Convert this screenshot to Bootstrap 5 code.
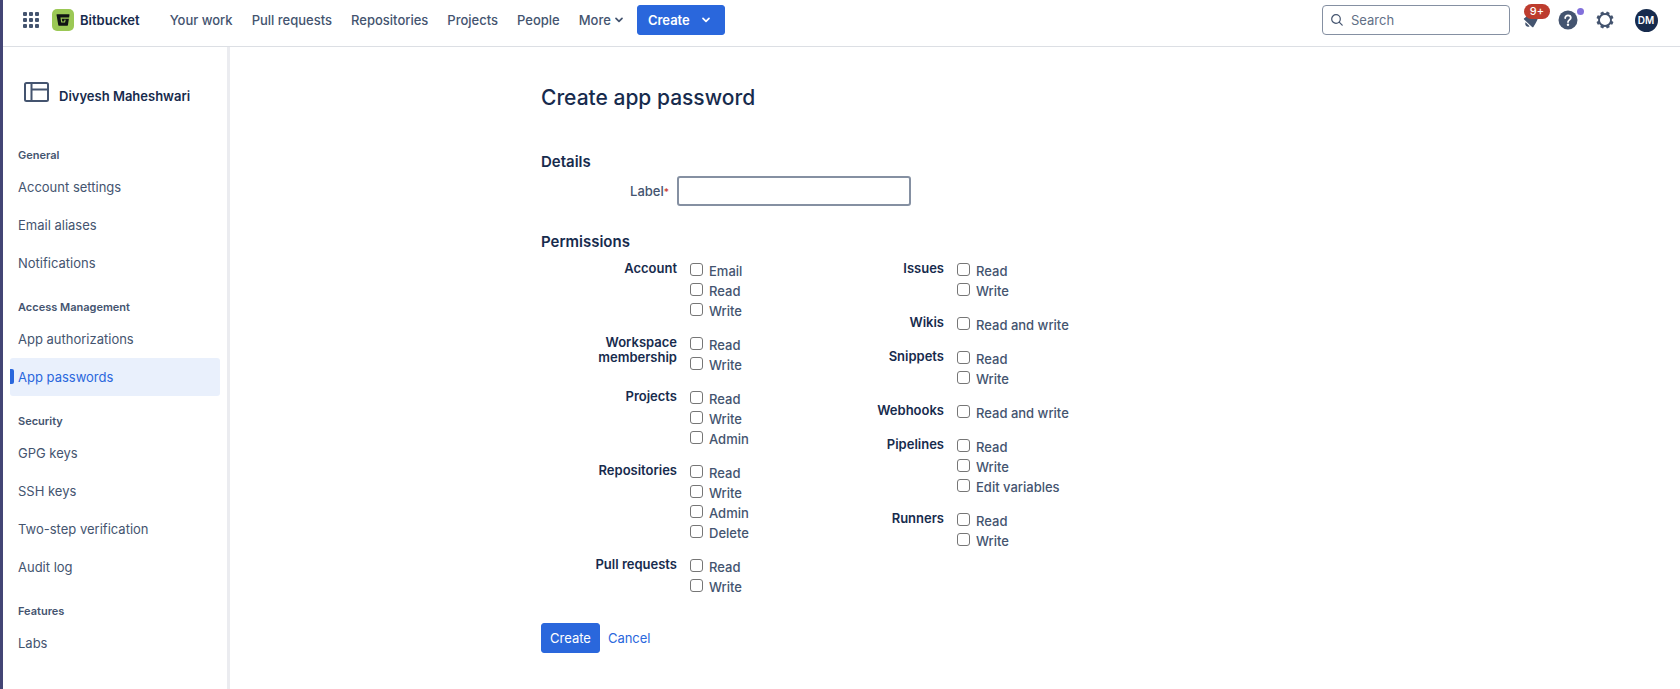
<!DOCTYPE html>
<html lang="en">
<head>
<meta charset="utf-8">
<meta name="viewport" content="width=device-width, initial-scale=1">
<title>Create app password - Bitbucket</title>
<link href="https://cdn.jsdelivr.net/npm/bootstrap@5.3.0/dist/css/bootstrap.min.css" rel="stylesheet">
<style>
  :root { --ink: #172b4d; --subtle: #44546f; --brand: #2a67dc; }
  body { font-family: Inter, "Liberation Sans", sans-serif; font-size: 13px; line-height: 20px; color: var(--subtle); background: #fff; border-left: 3px solid #434575; min-height: 100vh; }
  a { color: inherit; text-decoration: none; }
  .topbar { padding: 5px 22px 11px 20px; border-bottom: 1px solid #dcdfe4; }
  .topbar svg, .side-title svg { display: block; flex: none; }
  .product { color: var(--ink); font-weight: 600; gap: 6px; margin-left: 13px; }
  .main-links { gap: 19px; margin-left: 30px; font-weight: 500; }
  .btn-brand { --bs-btn-color: #fff; --bs-btn-bg: var(--brand); --bs-btn-border-color: var(--brand); --bs-btn-hover-color: #fff; --bs-btn-hover-bg: #0c56cc; --bs-btn-hover-border-color: #0c56cc; --bs-btn-active-bg: #09326c; --bs-btn-active-color: #fff; --bs-btn-font-size: 13px; --bs-btn-line-height: 20px; --bs-btn-padding-y: 4px; --bs-btn-padding-x: 8px; --bs-btn-border-radius: 3px; }
  .btn-menu { --bs-btn-padding-x: 10px; font-weight: 600; margin-left: 14px; gap: 12px; padding-right: 14px; }
  .search { width: 188px; height: 30px; border: 1px solid #8590a2; border-radius: 4px; padding: 0 8px; gap: 8px; }
  .search input { border: 0; outline: 0; background: none; min-width: 0; width: 100%; padding: 0; color: var(--ink); }
  .search input::placeholder { color: #626f86; opacity: 1; }
  .top-actions { gap: 13px; margin-left: 9px; }
  .icon-btn { border: 0; background: none; padding: 0; color: var(--subtle); position: relative; width: 24px; height: 24px; display: flex; align-items: center; justify-content: center; }
  .count { position: absolute; left: 5px; top: -4px; width: 26px; height: 15px; border-radius: 8px; background: #bd3c2e; color: #fff; font-size: 11px; line-height: 15px; font-weight: 500; }
  .dot { position: absolute; right: -4px; top: 0; width: 7px; height: 7px; border-radius: 50%; background: #8270db; }
  .avatar { width: 23px; height: 23px; border-radius: 50%; background: #172b4d; color: #fff; font-size: 10px; font-weight: 600; line-height: 23px; }
  .sidebar { width: 227px; flex: none; border-right: 3px solid #ebecf0; padding: 35px 7px 27px; }
  .side-title { color: var(--ink); font-weight: 600; gap: 10px; padding-left: 14px; margin-bottom: 41px; }
  .side-title span { padding-top: 4px; }
  .side-head { font-size: 11px; font-weight: 600; line-height: 16px; margin: 17px 0 5px; padding-left: 8px; }
  .side-title + .side-head { margin-top: 0; }
  .side-link { display: block; line-height: 38px; padding-left: 8px; border-radius: 3px; }
  .side-link.current { background: #e9f0fc; color: var(--brand); position: relative; }
  .side-link.current::before { content: ""; position: absolute; left: 0; top: 11px; width: 4px; height: 15px; background: var(--brand); border-radius: 0 2px 2px 0; }
  .page { max-width: 828px; width: 100%; padding-top: 36px; }
  h1 { font-size: 21px; line-height: 30px; font-weight: 500; color: var(--ink); margin: 0 0 39px; }
  h2 { font-size: 15px; line-height: 20px; font-weight: 600; color: var(--ink); margin: 0; }
  .section-gap { margin-top: 26px; }
  .field-label { width: 136px; flex: none; text-align: right; }
  .required-mark { color: #c9372c; font-size: 10px; }
  .label-input { width: 234px; height: 30px; border: 2px solid #8590a2; border-radius: 3px; padding: 0 8px; color: var(--ink); }
  .label-input:focus { outline: 0; border-color: #388bff; }
  .perm-cols { display: grid; grid-template-columns: 267px minmax(267px, 1fr); padding-top: 9px; }
  .perm-col { display: flex; flex-direction: column; gap: 14px; }
  .perm { display: flex; gap: 13px; }
  .perm-name { width: 136px; flex: none; text-align: right; font-weight: 600; color: var(--ink); line-height: 15px; }
  .opt { display: flex; gap: 6px; height: 20px; font-weight: 500; }
  .opt input { appearance: none; width: 13px; height: 13px; border: 1px solid #767676; border-radius: 3px; background: #fff; margin: 2px 0 0; flex: none; }
  .opt input:checked { background: var(--brand); border-color: var(--brand); }
  .form-actions { margin-top: 26px; }
  .cancel-link { color: var(--brand); }
</style>
</head>
<body>
<header class="topbar d-flex align-items-center">
  <button class="icon-btn w-auto" aria-label="Switch to another product">
    <svg width="16" height="16" viewBox="0 0 16 16" fill="currentColor"><path d="M1 0h2a1 1 0 0 1 1 1v2a1 1 0 0 1-1 1H1a1 1 0 0 1-1-1V1a1 1 0 0 1 1-1ZM7 0h2a1 1 0 0 1 1 1v2a1 1 0 0 1-1 1H7a1 1 0 0 1-1-1V1a1 1 0 0 1 1-1ZM13 0h2a1 1 0 0 1 1 1v2a1 1 0 0 1-1 1h-2a1 1 0 0 1-1-1V1a1 1 0 0 1 1-1ZM1 6h2a1 1 0 0 1 1 1v2a1 1 0 0 1-1 1H1a1 1 0 0 1-1-1V7a1 1 0 0 1 1-1ZM7 6h2a1 1 0 0 1 1 1v2a1 1 0 0 1-1 1H7a1 1 0 0 1-1-1V7a1 1 0 0 1 1-1ZM13 6h2a1 1 0 0 1 1 1v2a1 1 0 0 1-1 1h-2a1 1 0 0 1-1-1V7a1 1 0 0 1 1-1ZM1 12h2a1 1 0 0 1 1 1v2a1 1 0 0 1-1 1H1a1 1 0 0 1-1-1v-2a1 1 0 0 1 1-1ZM7 12h2a1 1 0 0 1 1 1v2a1 1 0 0 1-1 1H7a1 1 0 0 1-1-1v-2a1 1 0 0 1 1-1ZM13 12h2a1 1 0 0 1 1 1v2a1 1 0 0 1-1 1h-2a1 1 0 0 1-1-1v-2a1 1 0 0 1 1-1Z"/></svg>
  </button>
  <a class="product d-flex align-items-center" href="#">
    <svg width="22" height="22" viewBox="0 0 22 22"><rect width="22" height="22" rx="5" fill="#9bc855"/><path d="M4.900 5.300h12.200c.3 0 .5.2.4.5l-1.600 10.500c0 .3-.3.500-.6.500H6.900c-.3 0-.6-.2-.6-.5L4.500 5.800c0-.3.1-.5.400-.5Z" fill="#101214"/><path d="M17.500 9.100H9.100l.6 3.900h2.900l.5-2.300" fill="none" stroke="#9bc855" stroke-width="1.100"/></svg>
    Bitbucket
  </a>
  <nav class="main-links d-flex align-items-center" aria-label="Main">
    <a href="#">Your work</a>
    <a href="#">Pull requests</a>
    <a href="#">Repositories</a>
    <a href="#">Projects</a>
    <a href="#">People</a>
    <a class="d-flex align-items-center gap-1" href="#">More
      <svg width="8" height="6" viewBox="0 0 8 6" fill="none" stroke="currentColor" stroke-width="1.700" stroke-linecap="round" stroke-linejoin="round"><path d="M1 1.300l3 3 3-3"/></svg></a>
  </nav>
  <button class="btn btn-brand btn-menu d-flex align-items-center">Create
    <svg width="8" height="6" viewBox="0 0 8 6" fill="none" stroke="currentColor" stroke-width="1.700" stroke-linecap="round" stroke-linejoin="round"><path d="M1 1.300l3 3 3-3"/></svg></button>
  <label class="search d-flex align-items-center ms-auto">
    <svg width="12" height="12" viewBox="0 0 12 12" fill="none" stroke="#44546f" stroke-width="1.200" stroke-linecap="round"><circle cx="5" cy="5" r="4.300"/><path d="M8.200 8.200l3 3"/></svg>
    <input type="search" placeholder="Search" aria-label="Search">
  </label>
  <div class="top-actions d-flex align-items-center">
    <button class="icon-btn" aria-label="Notifications">
      <svg width="20" height="20" viewBox="0 0 20 20" fill="currentColor"><path d="M3.200 8.300C7 5.500 10 3 14 3c3 1 3.500 4 2.300 7-.9 2.200-2.300 4.500-3.900 6.900-.3.500-.9.500-1.300.1L3.100 9.500c-.4-.4-.3-.9.100-1.200Z"/><path d="M4.600 12.200l4 4c-1 .9-2.500.8-3.400-.1s-1.300-2.800-.6-3.900Z"/></svg>
      <span class="count">9+</span>
    </button>
    <button class="icon-btn" aria-label="Help">
      <svg width="20" height="20" viewBox="0 0 20 20"><circle cx="10" cy="10" r="9.500" fill="#44546f"/><path d="M7.200 8c0-1.600 1.200-2.700 2.800-2.700s2.800 1 2.800 2.500c0 2-2.800 2.200-2.800 4.200" fill="none" stroke="#fff" stroke-width="1.800" stroke-linecap="round"/><circle cx="10" cy="14.800" r="1.200" fill="#fff"/></svg>
      <span class="dot"></span>
    </button>
    <button class="icon-btn" aria-label="Settings">
      <svg width="18" height="18" viewBox="0 0 18 18"><circle cx="9" cy="9" r="6" fill="none" stroke="#44546f" stroke-width="1.900"/><g fill="#44546f"><rect x="7.300" y=".4" width="3.400" height="3" rx=".8" transform="rotate(22.500 9 9)"/><rect x="7.300" y=".4" width="3.400" height="3" rx=".8" transform="rotate(67.500 9 9)"/><rect x="7.300" y=".4" width="3.400" height="3" rx=".8" transform="rotate(112.500 9 9)"/><rect x="7.300" y=".4" width="3.400" height="3" rx=".8" transform="rotate(157.500 9 9)"/><rect x="7.300" y=".4" width="3.400" height="3" rx=".8" transform="rotate(202.500 9 9)"/><rect x="7.300" y=".4" width="3.400" height="3" rx=".8" transform="rotate(247.500 9 9)"/><rect x="7.300" y=".4" width="3.400" height="3" rx=".8" transform="rotate(292.500 9 9)"/><rect x="7.300" y=".4" width="3.400" height="3" rx=".8" transform="rotate(337.500 9 9)"/></g></svg>
    </button>
    <button class="icon-btn ms-1" aria-label="Your profile"><span class="avatar">DM</span></button>
  </div>
</header>

<div class="d-flex">
  <nav class="sidebar" aria-label="Settings">
    <div class="side-title d-flex align-items-start">
      <svg width="25" height="20" viewBox="0 0 25 20" fill="none" stroke="#44546f" stroke-width="2"><rect x="1" y="1" width="23" height="18" rx="1.500"/><path d="M7.500 1v18M7.500 7.500H24"/></svg>
      <span>Divyesh Maheshwari</span>
    </div>
    <div class="side-head">General</div>
    <a class="side-link" href="#">Account settings</a>
    <a class="side-link" href="#">Email aliases</a>
    <a class="side-link" href="#">Notifications</a>
    <div class="side-head">Access Management</div>
    <a class="side-link" href="#">App authorizations</a>
    <a class="side-link current" href="#" aria-current="page">App passwords</a>
    <div class="side-head">Security</div>
    <a class="side-link" href="#">GPG keys</a>
    <a class="side-link" href="#">SSH keys</a>
    <a class="side-link" href="#">Two-step verification</a>
    <a class="side-link" href="#">Audit log</a>
    <div class="side-head">Features</div>
    <a class="side-link" href="#">Labs</a>
  </nav>

  <main class="flex-grow-1 d-flex justify-content-center">
    <form class="page">
      <h1>Create app password</h1>
      <h2>Details</h2>
      <div class="d-flex align-items-center mt-1">
        <label class="field-label pe-2 fw-medium" for="label">Label<span class="required-mark">*</span></label>
        <input class="label-input" id="label" type="text" required>
      </div>
      <h2 class="section-gap">Permissions</h2>
      <div class="perm-cols">
        <div class="perm-col">
          <div class="perm"><div class="perm-name">Account</div><div>
            <label class="opt"><input type="checkbox">Email</label>
            <label class="opt"><input type="checkbox">Read</label>
            <label class="opt"><input type="checkbox">Write</label></div></div>
          <div class="perm"><div class="perm-name">Workspace<br>membership</div><div>
            <label class="opt"><input type="checkbox">Read</label>
            <label class="opt"><input type="checkbox">Write</label></div></div>
          <div class="perm"><div class="perm-name">Projects</div><div>
            <label class="opt"><input type="checkbox">Read</label>
            <label class="opt"><input type="checkbox">Write</label>
            <label class="opt"><input type="checkbox">Admin</label></div></div>
          <div class="perm"><div class="perm-name">Repositories</div><div>
            <label class="opt"><input type="checkbox">Read</label>
            <label class="opt"><input type="checkbox">Write</label>
            <label class="opt"><input type="checkbox">Admin</label>
            <label class="opt"><input type="checkbox">Delete</label></div></div>
          <div class="perm"><div class="perm-name">Pull requests</div><div>
            <label class="opt"><input type="checkbox">Read</label>
            <label class="opt"><input type="checkbox">Write</label></div></div>
        </div>
        <div class="perm-col">
          <div class="perm"><div class="perm-name">Issues</div><div>
            <label class="opt"><input type="checkbox">Read</label>
            <label class="opt"><input type="checkbox">Write</label></div></div>
          <div class="perm"><div class="perm-name">Wikis</div><div>
            <label class="opt"><input type="checkbox">Read and write</label></div></div>
          <div class="perm"><div class="perm-name">Snippets</div><div>
            <label class="opt"><input type="checkbox">Read</label>
            <label class="opt"><input type="checkbox">Write</label></div></div>
          <div class="perm"><div class="perm-name">Webhooks</div><div>
            <label class="opt"><input type="checkbox">Read and write</label></div></div>
          <div class="perm"><div class="perm-name">Pipelines</div><div>
            <label class="opt"><input type="checkbox">Read</label>
            <label class="opt"><input type="checkbox">Write</label>
            <label class="opt"><input type="checkbox">Edit variables</label></div></div>
          <div class="perm"><div class="perm-name">Runners</div><div>
            <label class="opt"><input type="checkbox">Read</label>
            <label class="opt"><input type="checkbox">Write</label></div></div>
        </div>
      </div>
      <div class="form-actions d-flex align-items-center gap-2">
        <button class="btn btn-brand" type="submit">Create</button>
        <a class="cancel-link" href="#">Cancel</a>
      </div>
    </form>
  </main>
</div>
<script src="https://cdn.jsdelivr.net/npm/bootstrap@5.3.0/dist/js/bootstrap.bundle.min.js"></script>
</body>
</html>
